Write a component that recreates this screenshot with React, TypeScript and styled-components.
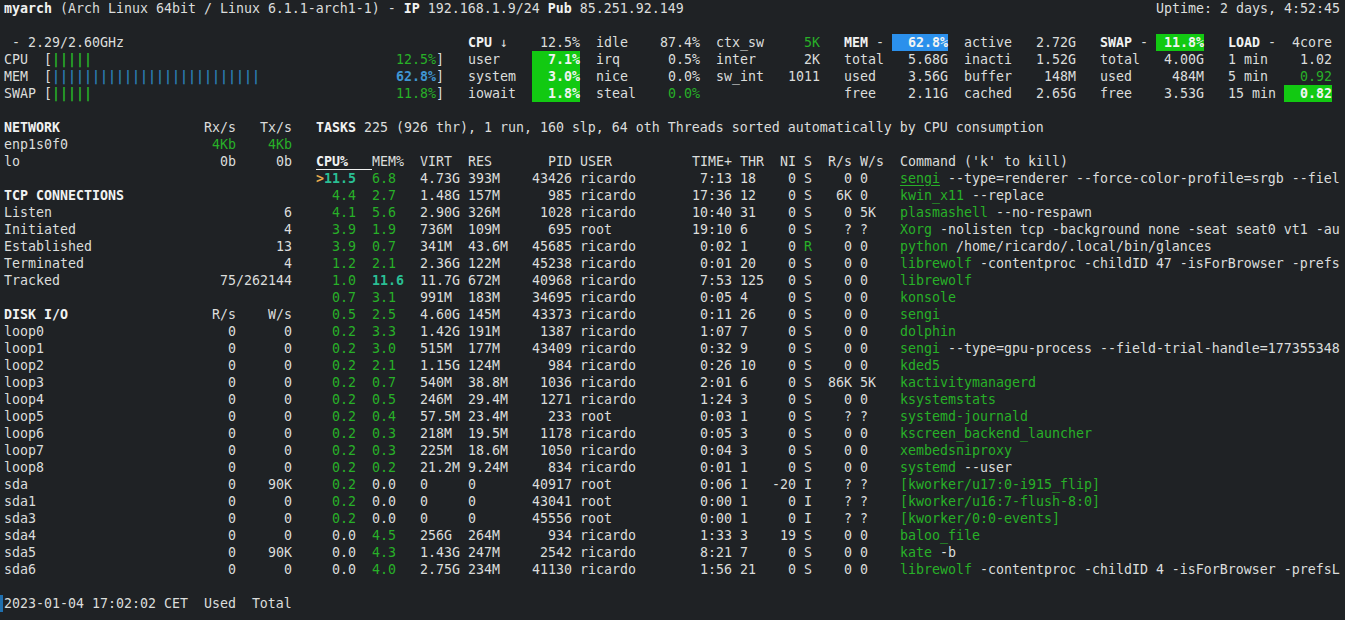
import styled, {createGlobalStyle} from 'styled-components';

const COL = 8;
const ROW = 17;

const tones = {
  text: '#dbdddc',
  strong: '#f1f2f2',
  green: '#28b028',
  teal: '#2abf94',
  blue: '#3f95d2',
  bar: '#2b7bb2',
  orange: '#e8ab4e',
};

type Tone = keyof typeof tones;

const GlobalStyle = createGlobalStyle`
  html, body {
    margin: 0;
    padding: 0;
    background: #1f2225;
  }
`;

const Screen = styled.div`
  box-sizing: border-box;
  width: 1345px;
  height: 620px;
  overflow: hidden;
  padding: 0 5px 0 4px;
  background: #1f2225;
  color: ${tones.text};
  font-family: "DejaVu Sans Mono", "Liberation Mono", monospace;
  font-size: 13.29px;
  line-height: ${ROW}px;
  white-space: pre;
`;

const Line = styled.div`
  position: relative;
  display: flex;
  height: ${ROW}px;
`;

const TopBar = styled(Line)`
  justify-content: space-between;
  margin-bottom: ${ROW}px;
`;

const Stats = styled.div`
  display: flex;
  margin-bottom: ${ROW}px;
`;

const QuickLook = styled.div`
  width: ${55 * COL}px;
  margin-right: ${3 * COL}px;
`;

const BarRow = styled(Line)`
  justify-content: space-between;
`;

const StatBlock = styled.div<{ $w: number, $gap: number }>`
  width: ${p => p.$w * COL}px;
  margin-right: ${p => p.$gap * COL}px;
`;

const StatRow = styled(Line)`
  justify-content: space-between;
`;

const Text = styled.span<{ $tone?: Tone, $bold?: boolean, $line?: boolean }>`
  color: ${p => tones[p.$tone ?? 'text']};
  font-weight: ${p => (p.$bold ? 700 : 400)};
  ${p => p.$line && 'text-decoration: underline; text-underline-offset: 2px;'}
`;

const Fill = styled.span<{ $w: number, $kind: 'green' | 'blue' }>`
  width: ${p => p.$w * COL}px;
  text-align: right;
  color: #f2f4f2;
  font-weight: 700;
  background: ${p => (p.$kind === 'blue' ? '#2b90ec' : '#12c912')};
`;

const Body = styled.div`
  display: flex;
`;

const Sidebar = styled.div`
  width: ${36 * COL}px;
  margin-right: ${3 * COL}px;
`;

const Section = styled.div`
  margin-bottom: ${ROW}px;
`;

const Main = styled.div`
  flex: 1;
  min-width: 0;
`;

const TasksLine = styled(Line)`
  margin-bottom: ${ROW}px;
`;

const Cell = styled.span<{ $w: number, $right?: boolean, $pl?: number, $pr?: number, $tone?: Tone, $bold?: boolean, $rule?: boolean }>`
  box-sizing: border-box;
  flex: none;
  width: ${p => p.$w * COL}px;
  padding-left: ${p => (p.$pl ?? 0) * COL}px;
  padding-right: ${p => (p.$pr ?? 0) * COL}px;
  text-align: ${p => (p.$right ? 'right' : 'left')};
  color: ${p => tones[p.$tone ?? 'text']};
  font-weight: ${p => (p.$bold ? 700 : 400)};
  ${p => p.$rule && `box-shadow: inset 0 -1px 0 ${tones.strong};`}
`;

const StatusLine = styled(Line)`
  margin-top: ${ROW}px;
`;

const Cursor = styled.span`
  position: absolute;
  left: -4px;
  top: 0;
  width: 3px;
  height: ${ROW}px;
  background: #1f6fae;
`;

type Stat = { label: string, mark?: string, value: string, tone?: Tone, fill?: number };

const statBlocks: { w: number, gap: number, title?: boolean, titleFill?: 'green' | 'blue', rows: Stat[] }[] = [
  {
    w: 14, gap: 2, title: true, rows: [
      {label: 'CPU', mark: ' ↓', value: '12.5%'},
      {label: 'user', value: '7.1%', fill: 6},
      {label: 'system', value: '3.0%', fill: 6},
      {label: 'iowait', value: '1.8%', fill: 6},
    ],
  },
  {
    w: 13, gap: 2, rows: [
      {label: 'idle', value: '87.4%'},
      {label: 'irq', value: '0.5%'},
      {label: 'nice', value: '0.0%'},
      {label: 'steal', value: '0.0%', tone: 'green'},
    ],
  },
  {
    w: 13, gap: 3, rows: [
      {label: 'ctx_sw', value: '5K', tone: 'green'},
      {label: 'inter', value: '2K'},
      {label: 'sw_int', value: '1011'},
      {label: ' ', value: ' '},
    ],
  },
  {
    w: 13, gap: 2, title: true, titleFill: 'blue', rows: [
      {label: 'MEM', mark: ' -', value: '62.8%', fill: 7},
      {label: 'total', value: '5.68G'},
      {label: 'used', value: '3.56G'},
      {label: 'free', value: '2.11G'},
    ],
  },
  {
    w: 14, gap: 3, rows: [
      {label: 'active', value: '2.72G'},
      {label: 'inacti', value: '1.52G'},
      {label: 'buffer', value: '148M'},
      {label: 'cached', value: '2.65G'},
    ],
  },
  {
    w: 13, gap: 3, title: true, titleFill: 'green', rows: [
      {label: 'SWAP', mark: ' -', value: '11.8%', fill: 6},
      {label: 'total', value: '4.00G'},
      {label: 'used', value: '484M'},
      {label: 'free', value: '3.53G'},
    ],
  },
  {
    w: 13, gap: 0, title: true, rows: [
      {label: 'LOAD', mark: ' -', value: '4core'},
      {label: '1 min', value: '1.02'},
      {label: '5 min', value: '0.92', tone: 'green'},
      {label: '15 min', value: '0.82', fill: 6},
    ],
  },
];

const bars: { name: string, pipes: number, pct: string, tone: Tone, pctTone: Tone, pctBold?: boolean }[] = [
  {name: 'CPU ', pipes: 5, pct: '12.5%', tone: 'green', pctTone: 'green'},
  {name: 'MEM ', pipes: 26, pct: '62.8%', tone: 'bar', pctTone: 'blue', pctBold: true},
  {name: 'SWAP', pipes: 5, pct: '11.8%', tone: 'green', pctTone: 'green'},
];

const diskRows: [string, string, string][] = [
  ['loop0', '0', '0'], ['loop1', '0', '0'], ['loop2', '0', '0'], ['loop3', '0', '0'],
  ['loop4', '0', '0'], ['loop5', '0', '0'], ['loop6', '0', '0'], ['loop7', '0', '0'],
  ['loop8', '0', '0'], ['sda', '0', '90K'], ['sda1', '0', '0'], ['sda3', '0', '0'],
  ['sda4', '0', '0'], ['sda5', '0', '90K'], ['sda6', '0', '0'],
];

const tcpRows: [string, string][] = [
  ['Listen', '6'], ['Initiated', '4'], ['Established', '13'], ['Terminated', '4'], ['Tracked', '75/262144'],
];

// cpu mem virt res pid user time thr ni state r/s w/s name args
const processes: string[][] = [
  ['>11.5', '6.8', '4.73G', '393M', '43426', 'ricardo', '7:13', '18', '0', 'S', '0', '0', 'sengi', ' --type=renderer --force-color-profile=srgb --fiel'],
  ['4.4', '2.7', '1.48G', '157M', '985', 'ricardo', '17:36', '12', '0', 'S', '6K', '0', 'kwin_x11', ' --replace'],
  ['4.1', '5.6', '2.90G', '326M', '1028', 'ricardo', '10:40', '31', '0', 'S', '0', '5K', 'plasmashell', ' --no-respawn'],
  ['3.9', '1.9', '736M', '109M', '695', 'root', '19:10', '6', '0', 'S', '?', '?', 'Xorg', ' -nolisten tcp -background none -seat seat0 vt1 -au'],
  ['3.9', '0.7', '341M', '43.6M', '45685', 'ricardo', '0:02', '1', '0', 'R', '0', '0', 'python', ' /home/ricardo/.local/bin/glances'],
  ['1.2', '2.1', '2.36G', '122M', '45238', 'ricardo', '0:01', '20', '0', 'S', '0', '0', 'librewolf', ' -contentproc -childID 47 -isForBrowser -prefs'],
  ['1.0', '11.6', '11.7G', '672M', '40968', 'ricardo', '7:53', '125', '0', 'S', '0', '0', 'librewolf', ''],
  ['0.7', '3.1', '991M', '183M', '34695', 'ricardo', '0:05', '4', '0', 'S', '0', '0', 'konsole', ''],
  ['0.5', '2.5', '4.60G', '145M', '43373', 'ricardo', '0:11', '26', '0', 'S', '0', '0', 'sengi', ''],
  ['0.2', '3.3', '1.42G', '191M', '1387', 'ricardo', '1:07', '7', '0', 'S', '0', '0', 'dolphin', ''],
  ['0.2', '3.0', '515M', '177M', '43409', 'ricardo', '0:32', '9', '0', 'S', '0', '0', 'sengi', ' --type=gpu-process --field-trial-handle=177355348'],
  ['0.2', '2.1', '1.15G', '124M', '984', 'ricardo', '0:26', '10', '0', 'S', '0', '0', 'kded5', ''],
  ['0.2', '0.7', '540M', '38.8M', '1036', 'ricardo', '2:01', '6', '0', 'S', '86K', '5K', 'kactivitymanagerd', ''],
  ['0.2', '0.5', '246M', '29.4M', '1271', 'ricardo', '1:24', '3', '0', 'S', '0', '0', 'ksystemstats', ''],
  ['0.2', '0.4', '57.5M', '23.4M', '233', 'root', '0:03', '1', '0', 'S', '?', '?', 'systemd-journald', ''],
  ['0.2', '0.3', '218M', '19.5M', '1178', 'ricardo', '0:05', '3', '0', 'S', '0', '0', 'kscreen_backend_launcher', ''],
  ['0.2', '0.3', '225M', '18.6M', '1050', 'ricardo', '0:04', '3', '0', 'S', '0', '0', 'xembedsniproxy', ''],
  ['0.2', '0.2', '21.2M', '9.24M', '834', 'ricardo', '0:01', '1', '0', 'S', '0', '0', 'systemd', ' --user'],
  ['0.2', '0.0', '0', '0', '40917', 'root', '0:06', '1', '-20', 'I', '?', '?', '[kworker/u17:0-i915_flip]', ''],
  ['0.2', '0.0', '0', '0', '43041', 'root', '0:00', '1', '0', 'I', '?', '?', '[kworker/u16:7-flush-8:0]', ''],
  ['0.2', '0.0', '0', '0', '45556', 'root', '0:00', '1', '0', 'I', '?', '?', '[kworker/0:0-events]', ''],
  ['0.0', '4.5', '256G', '264M', '934', 'ricardo', '1:33', '3', '19', 'S', '0', '0', 'baloo_file', ''],
  ['0.0', '4.3', '1.43G', '247M', '2542', 'ricardo', '8:21', '7', '0', 'S', '0', '0', 'kate', ' -b'],
  ['0.0', '4.0', '2.75G', '234M', '41130', 'ricardo', '1:56', '21', '0', 'S', '0', '0', 'librewolf', ' -contentproc -childID 4 -isForBrowser -prefsL'],
];

const pctTone = (value: string): Tone => {
  if (value === '0.0') return 'text';
  return parseFloat(value) > 10 ? 'teal' : 'green';
};

function ProcessRow({row, index}: { row: string[], index: number }) {
  const [cpu, mem, virt, res, pid, user, time, thr, ni, state, rs, ws, name, args] = row;
  const selected = cpu.startsWith('>');
  const cpuValue = cpu.replace('>', '');
  return (
    <Line>
      <Cell $w={7} $pr={2} $right $tone={pctTone(cpuValue)} $bold={selected}>
        {selected && <Text $tone="orange" $bold>&gt;</Text>}
        {cpuValue}
      </Cell>
      <Cell $w={6} $tone={pctTone(mem)} $bold={parseFloat(mem) > 10}>{mem}</Cell>
      <Cell $w={6}>{virt}</Cell>
      <Cell $w={6}>{res}</Cell>
      <Cell $w={8} $pr={1} $right>{pid}</Cell>
      <Cell $w={12}>{user}</Cell>
      <Cell $w={8} $pr={1} $right>{time}</Cell>
      <Cell $w={4}>{thr}</Cell>
      <Cell $w={3} $right>{ni}</Cell>
      <Cell $w={2} $pl={1} $tone={state === 'R' ? 'green' : 'text'}>{state}</Cell>
      <Cell $w={5} $right>{rs}</Cell>
      <Cell $w={6} $pl={1}>{ws}</Cell>
      <span>
        <Text $tone="green" $line={index === 0}>{name}</Text>
        {args}
      </span>
    </Line>
  );
}

export default function App() {
  return (
    <Screen>
      <GlobalStyle />
      <TopBar>
        <span>
          <Text $bold $tone="strong">myarch</Text> (Arch Linux 64bit / Linux 6.1.1-arch1-1) - <Text $bold $tone="strong">IP</Text> 192.168.1.9/24 <Text $bold $tone="strong">Pub</Text> 85.251.92.149
        </span>
        <span>Uptime: 2 days, 4:52:45</span>
      </TopBar>

      <Stats>
        <QuickLook>
          <Line> - 2.29/2.60GHz</Line>
          {bars.map(bar => (
            <BarRow key={bar.name}>
              <span>
                {bar.name} [<Text $tone={bar.tone} $bold>{'|'.repeat(bar.pipes)}</Text>
              </span>
              <span>
                <Text $tone={bar.pctTone} $bold={bar.pctBold}>{bar.pct}</Text>]
              </span>
            </BarRow>
          ))}
        </QuickLook>
        {statBlocks.map((block, i) => (
          <StatBlock key={i} $w={block.w} $gap={block.gap}>
            {block.rows.map((row, r) => (
              <StatRow key={row.label + r}>
                <span>
                  <Text $tone={block.title && r === 0 ? 'strong' : 'text'} $bold={block.title && r === 0}>{row.label}</Text>
                  {row.mark}
                </span>
                {row.fill
                  ? <Fill $w={row.fill} $kind={block.titleFill === 'blue' && r === 0 ? 'blue' : 'green'}>{row.value}</Fill>
                  : <Text $tone={row.tone}>{row.value}</Text>}
              </StatRow>
            ))}
          </StatBlock>
        ))}
      </Stats>

      <Body>
        <Sidebar>
          <Section>
            <Line>
              <Cell $w={22} $bold $tone="strong">NETWORK</Cell>
              <Cell $w={7} $right>Rx/s</Cell>
              <Cell $w={7} $right>Tx/s</Cell>
            </Line>
            <Line>
              <Cell $w={22}>enp1s0f0</Cell>
              <Cell $w={7} $right $tone="green">4Kb</Cell>
              <Cell $w={7} $right $tone="green">4Kb</Cell>
            </Line>
            <Line>
              <Cell $w={22}>lo</Cell>
              <Cell $w={7} $right>0b</Cell>
              <Cell $w={7} $right>0b</Cell>
            </Line>
          </Section>
          <Section>
            <Line><Cell $w={36} $bold $tone="strong">TCP CONNECTIONS</Cell></Line>
            {tcpRows.map(([label, value]) => (
              <Line key={label}>
                <Cell $w={22}>{label}</Cell>
                <Cell $w={14} $right>{value}</Cell>
              </Line>
            ))}
          </Section>
          <Line>
            <Cell $w={22} $bold $tone="strong">DISK I/O</Cell>
            <Cell $w={7} $right>R/s</Cell>
            <Cell $w={7} $right>W/s</Cell>
          </Line>
          {diskRows.map(([name, r, w]) => (
            <Line key={name}>
              <Cell $w={22}>{name}</Cell>
              <Cell $w={7} $right>{r}</Cell>
              <Cell $w={7} $right>{w}</Cell>
            </Line>
          ))}
        </Sidebar>

        <Main>
          <TasksLine>
            <span>
              <Text $bold $tone="strong">TASKS</Text> 225 (926 thr), 1 run, 160 slp, 64 oth Threads sorted automatically by CPU consumption
            </span>
          </TasksLine>
          <Line>
            <Cell $w={7} $bold $tone="strong" $rule>CPU%</Cell>
            <Cell $w={6}>MEM%</Cell>
            <Cell $w={6}>VIRT</Cell>
            <Cell $w={6}>RES</Cell>
            <Cell $w={8} $pr={1} $right>PID</Cell>
            <Cell $w={12}>USER</Cell>
            <Cell $w={8} $pr={1} $right>TIME+</Cell>
            <Cell $w={4}>THR</Cell>
            <Cell $w={3} $right>NI</Cell>
            <Cell $w={2} $pl={1}>S</Cell>
            <Cell $w={5} $right>R/s</Cell>
            <Cell $w={6} $pl={1}>W/s</Cell>
            <span>Command ('k' to kill)</span>
          </Line>
          {processes.map((row, i) => <ProcessRow key={row[4]} row={row} index={i} />)}
        </Main>
      </Body>

      <StatusLine>
        <Cursor />
        2023-01-04 17:02:02 CET  Used  Total
      </StatusLine>
    </Screen>
  );
}
